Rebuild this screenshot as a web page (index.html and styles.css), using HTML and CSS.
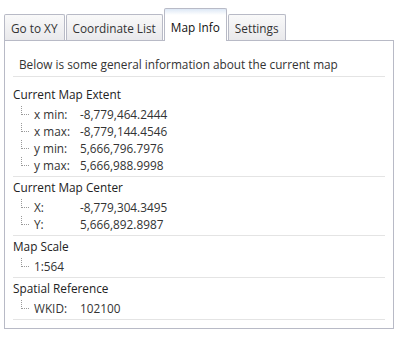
FILE: index.html
```html
<!DOCTYPE html>
<html lang="en">
<head>
	<meta charset="UTF-8">
	<title>Map Info</title>
	<link rel="stylesheet" href="styles.css">
</head>
<body>
	<div class="tab-panel">
		<div class="tab-bar">
			<div class="tab">Go to XY</div>
			<div class="tab">Coordinate List</div>
			<div class="tab tab-active">Map Info</div>
			<div class="tab">Settings</div>
		</div>
		<div class="tab-body">
			<p class="intro">Below is some general information about the current map</p>

			<div class="section section-first">
				<div class="section-title">Current Map Extent</div>
				<div class="row"><span class="branch"></span><span class="key">x min:</span><span class="val">-8,779,464.2444</span></div>
				<div class="row"><span class="branch"></span><span class="key">x max:</span><span class="val">-8,779,144.4546</span></div>
				<div class="row"><span class="branch"></span><span class="key">y min:</span><span class="val">5,666,796.7976</span></div>
				<div class="row"><span class="branch"></span><span class="key">y max:</span><span class="val">5,666,988.9998</span></div>
			</div>

			<div class="section">
				<div class="section-title">Current Map Center</div>
				<div class="row"><span class="branch"></span><span class="key">X:</span><span class="val">-8,779,304.3495</span></div>
				<div class="row"><span class="branch"></span><span class="key">Y:</span><span class="val">5,666,892.8987</span></div>
			</div>

			<div class="section">
				<div class="section-title">Map Scale</div>
				<div class="row"><span class="branch"></span><span class="val">1:564</span></div>
			</div>

			<div class="section">
				<div class="section-title">Spatial Reference</div>
				<div class="row"><span class="branch"></span><span class="key">WKID:</span><span class="val">102100</span></div>
			</div>
		</div>
	</div>
</body>
</html>
```

FILE: styles.css
```css
html,body,div,p,span{
	padding: 0;
	margin: 0;
	border: 0;
}
body{
	background: #fff;
	color: #222;
	font-family: "Open Sans", "Noto Sans", sans-serif;
	font-size: 11.8px;
}
.tab-panel{
	width: 390px;
	padding: 8px 0 0 4px;
}
.tab-bar{
	display: flex;
	align-items: flex-end;
	gap: 1px;
	height: 32px;
	position: relative;
	z-index: 1;
}
.tab{
	height: 25px;
	line-height: 27px;
	padding: 0 6px;
	border: 1px solid #b8bac6;
	border-bottom: 0;
	border-radius: 2px 2px 0 0;
	background: linear-gradient(#f9f9f9, #e9e9ec);
	color: #333;
	white-space: nowrap;
}
.tab-active{
	height: 32px;
	line-height: 36px;
	padding: 0 6px;
	margin-bottom: -1px;
	background: linear-gradient(#dde8f6, #fff 6px);
	color: #111;
}
.tab-body{
	border: 1px solid #b8bac6;
	height: 287px;
	padding: 0 8px;
}
.intro{
	line-height: 16px;
	padding: 15px 0 4px 6px;
	border-bottom: 1px solid #e4e4e4;
	color: #333;
}
.section{
	padding-bottom: 3px;
	border-bottom: 1px solid #e4e4e4;
}
.section-first{
	padding-top: 7px;
}
.section-title{
	line-height: 21px;
	color: #222;
}
.row{
	display: flex;
	align-items: center;
	height: 17px;
	padding-left: 8px;
	color: #333;
}
.branch{
	width: 7px;
	height: 8px;
	margin: -6px 5px 0 0;
	border-left: 1px dotted #9a9a9a;
	border-bottom: 1px dotted #9a9a9a;
}
.key{
	width: 46px;
}
```
